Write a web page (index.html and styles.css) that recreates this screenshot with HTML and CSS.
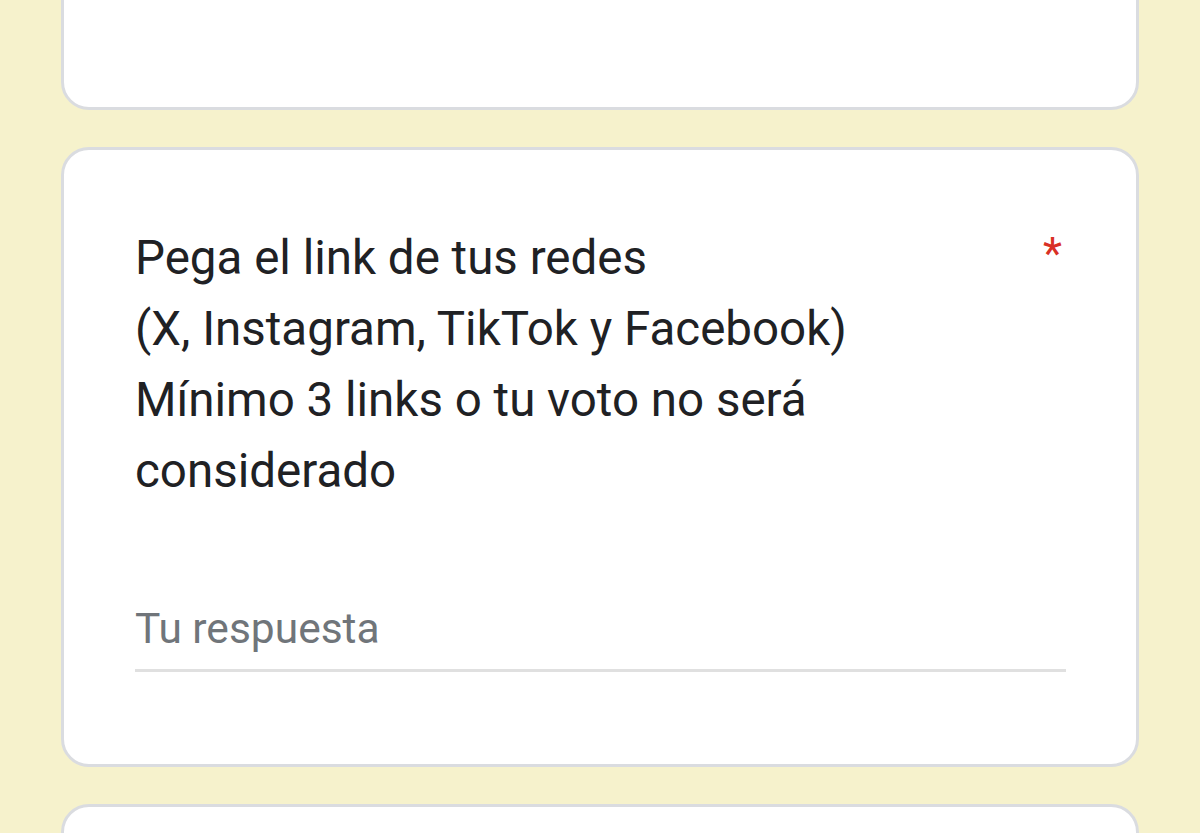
FILE: index.html
```html
<!DOCTYPE html>
<html lang="es">
<head>
<meta charset="utf-8">
<link rel="stylesheet" href="styles.css">
</head>
<body>
<div class="page">
  <div class="card card-top"></div>
  <div class="card question">
    <div class="q-head">
      <div class="q-title">Pega el link de tus redes<br>(X, Instagram, TikTok y Facebook)<br>Mínimo 3 links o tu voto no será considerado</div>
      <span class="req">*</span>
    </div>
    <div class="answer">Tu respuesta</div>
  </div>
  <div class="card card-bottom"></div>
</div>
</body>
</html>
```

FILE: styles.css
```css
html, body {
  margin: 0;
  padding: 0;
  background: #f6f2cc;
  height: 833px;
  overflow: hidden;
}
.page {
  width: 1078px;
  margin-left: 61px;
  display: flex;
  flex-direction: column;
  gap: 37px;
  font-family: Roboto, "Liberation Sans", sans-serif;
}
.card {
  background: #fff;
  border: 3px solid #dadce0;
  border-radius: 28px;
  box-sizing: border-box;
}
.card-top {
  margin-top: -60px;
  height: 170px;
}
.question {
  height: 620px;
  padding: 73px 72px 0 71px;
}
.q-head {
  display: flex;
  justify-content: space-between;
  align-items: flex-start;
}
.q-title {
  width: 820px;
  font-size: 47.5px;
  line-height: 71px;
  color: #202124;
}
.req {
  color: #d93025;
  font-size: 44px;
  line-height: 71px;
  margin-right: 2px;
  margin-top: -4px;
}
.answer {
  margin-top: 97px;
  width: 931px;
  font-size: 42.5px;
  line-height: 50px;
  color: #70757a;
  padding-bottom: 15px;
  border-bottom: 3px solid #e0e0e0;
}
.card-bottom {
  height: 120px;
}
```
